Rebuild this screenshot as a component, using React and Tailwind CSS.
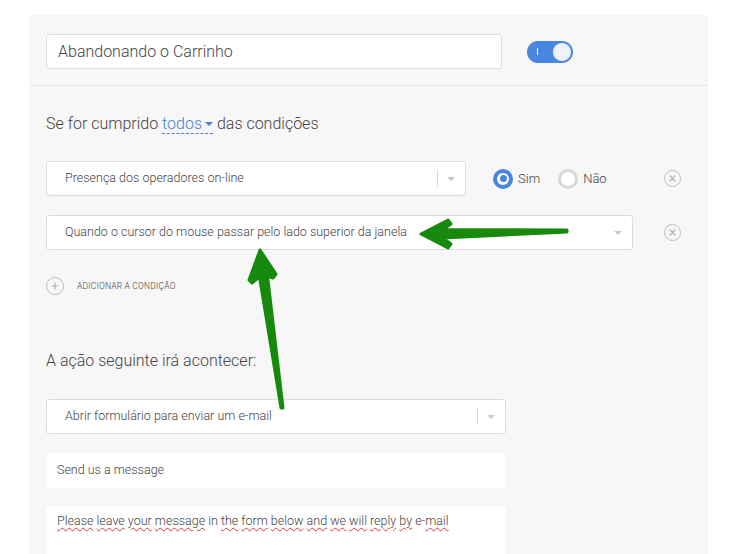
import React from 'react';

const Caret = () => (
    <span className="block w-0 h-0 border-l-[4px] border-r-[4px] border-t-[4px] border-l-transparent border-r-transparent border-t-[#c8c8c8]"></span>
);

const Select = ({ text, width, divider }) => (
    <div className={`${width} h-[35px] flex items-center bg-white border border-[#dcdcdc] rounded-[3px] pl-[18px] pr-[10px] text-[12.5px] font-light text-[#444]`}>
        <span className="flex-1 truncate">{text}</span>
        {divider && <span className="w-px h-[17px] bg-[#dadada] mr-[9px]"></span>}
        <Caret />
    </div>
);

const CloseBtn = () => (
    <div className="ml-auto mr-[10px] w-[17px] h-[17px] rounded-full border-[1.5px] border-[#bdbdbd] flex items-center justify-center">
        <svg width="7" height="7" viewBox="0 0 7 7">
            <path d="M1 1L6 6M6 1L1 6" stroke="#b5b5b5" strokeWidth="1.4" strokeLinecap="round" />
        </svg>
    </div>
);

const Wavy = ({ children }) => (
    <span className="underline decoration-wavy decoration-[#e0303a] decoration-1 underline-offset-[2px]">{children}</span>
);

export default function App() {
    return (
        <div className="relative w-[750px] h-[554px] overflow-hidden bg-white font-['Roboto',sans-serif]">
            <div className="ml-[29px] mt-[15px] w-[679px] h-[600px] bg-[#f7f7f7]">
                {/* header */}
                <div className="flex items-center px-[17px] pt-[19px] pb-[16px] border-b border-[#e6e6e6]">
                    <div className="w-[456px] h-[35px] bg-white border border-[#dcdcdc] rounded-[3px] flex items-center pl-[11px] text-[16px] font-light text-[#444]">
                        Abandonando o Carrinho
                    </div>
                    <div className="ml-[25px] w-[46px] h-[22px] rounded-full bg-[#4a86de] flex items-center justify-between pl-[10px] pr-px">
                        <span className="w-px h-[7px] bg-white"></span>
                        <span className="w-[20px] h-[20px] rounded-full bg-[#eef3fb] border border-[#4a86de]"></span>
                    </div>
                </div>

                <div className="px-[17px]">
                    <p className="mt-[28px] text-[16px] leading-[20px] font-light text-[#444]">
                        Se for cumprido{' '}
                        <span className="text-[#4a7fd4] border-b border-dashed border-[#4a7fd4]">
                            todos
                            <span className="inline-block align-middle ml-[3px] mb-[2px] w-0 h-0 border-l-[4px] border-r-[4px] border-t-[4px] border-l-transparent border-r-transparent border-t-[#4a7fd4]"></span>
                        </span>{' '}
                        das condições
                    </p>

                    <div className="mt-[27px] flex items-center">
                        <Select text="Presença dos operadores on-line" width="w-[420px]" divider />
                        <div className="ml-[27px] flex items-center text-[13px] font-light text-[#444]">
                            <span className="w-[20px] h-[20px] rounded-full bg-[#4a86de] flex items-center justify-center">
                                <span className="w-[12px] h-[12px] rounded-full bg-white flex items-center justify-center">
                                    <span className="w-[7px] h-[7px] rounded-full bg-[#4a86de]"></span>
                                </span>
                            </span>
                            <span className="ml-[5px]">Sim</span>
                            <span className="ml-[18px] w-[20px] h-[20px] rounded-full border-[3px] border-[#d8d8d8] bg-white"></span>
                            <span className="ml-[5px]">Não</span>
                        </div>
                        <CloseBtn />
                    </div>

                    <div className="mt-[19px] flex items-center">
                        <Select text="Quando o cursor do mouse passar pelo lado superior da janela" width="w-[587px]" />
                        <CloseBtn />
                    </div>

                    <div className="mt-[27px] flex items-center">
                        <span className="w-[18px] h-[18px] rounded-full border-[1.5px] border-[#bdbdbd] flex items-center justify-center">
                            <svg width="8" height="8" viewBox="0 0 8 8">
                                <path d="M4 0.5V7.5M0.5 4H7.5" stroke="#b0b0b0" strokeWidth="1.2" />
                            </svg>
                        </span>
                        <span className="ml-[13px] text-[8.5px] tracking-[0.2px] font-light text-[#444]">ADICIONAR A CONDIÇÃO</span>
                    </div>

                    <p className="mt-[56px] text-[16px] leading-[20px] font-light text-[#444]">A ação seguinte irá acontecer:</p>

                    <div className="mt-[28px]">
                        <Select text="Abrir formulário para enviar um e-mail" width="w-[460px]" divider />
                    </div>

                    <div className="mt-[19px] w-[460px] h-[35px] bg-white rounded-[3px] flex items-center pl-[11px] text-[12.5px] font-light text-[#444]">
                        Send us a message
                    </div>

                    <div className="mt-[19px] w-[460px] h-[80px] bg-white rounded-[3px] pl-[11px] pt-[5px] text-[12.5px] font-light text-[#444]">
                        <Wavy>Please</Wavy> <Wavy>leave</Wavy> <Wavy>your</Wavy> <Wavy>message</Wavy> in <Wavy>the</Wavy> <Wavy>form</Wavy> <Wavy>below</Wavy> <Wavy>and</Wavy> <Wavy>we</Wavy> <Wavy>will</Wavy> <Wavy>reply</Wavy> <Wavy>by</Wavy> e-<Wavy>mail</Wavy>
                    </div>
                </div>
            </div>

            {/* annotation arrows */}
            <svg className="absolute inset-0 pointer-events-none" width="750" height="554" viewBox="0 0 750 554">
                <polygon
                    points="421,234 448,220 451,224 443,229.5 567,230 567,232 443,238 451,244 448,248"
                    fill="#178a0e" stroke="#178a0e" strokeWidth="3" strokeLinejoin="round"
                />
                <polygon
                    points="260,250 276,274 273,278 267.5,276 283,408 281,408 259.5,277 252,283 249,280"
                    fill="#178a0e" stroke="#178a0e" strokeWidth="3" strokeLinejoin="round"
                />
            </svg>
        </div>
    );
}
